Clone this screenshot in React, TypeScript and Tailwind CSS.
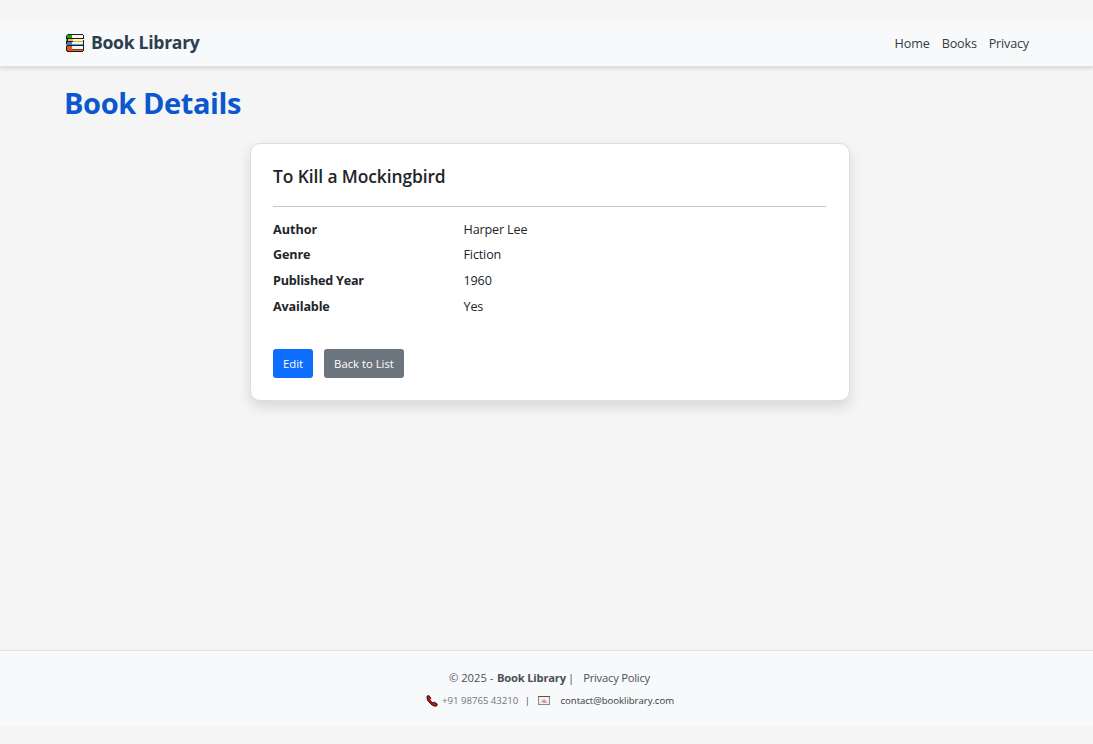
import React from "react";

function BooksIcon() {
  return (
    <svg className="h-[20px] w-[20px] shrink-0" viewBox="0 0 20 20">
      <path d="M4 1H18V2H19V6H18V7H19V18H18V19H2V18H1V13L2 12L1 11V8L2 7L1 6V3L3 1Z" fill="#1b1b1b" />
      <path d="M3 2H7V5H2V3Z" fill="#16a51b" />
      <path d="M7 2H18V5H7Z" fill="#f4f4f4" />
      <path d="M3 6H8V8H3Z" fill="#f2c230" />
      <path d="M8 6H18V8H8Z" fill="#fff3c0" />
      <path d="M8 8H18V9H8Z" fill="#e3b62c" />
      <path d="M2 9H7V12H2Z" fill="#2d84d8" />
      <path d="M7 9H18V11H7Z" fill="#eaf3fb" />
      <path d="M7 11H18V12H7Z" fill="#5ba5e5" />
      <path d="M2 13H7V18H3L2 17Z" fill="#f0500f" />
      <path d="M7 13H18V16H7Z" fill="#f7f7f7" />
      <path d="M7 16.5H18V18H7Z" fill="#f0601f" />
    </svg>
  );
}

function PhoneIcon() {
  return (
    <svg className="h-[12px] w-[12px] shrink-0" viewBox="0 0 12 12">
      <path
        d="M1 1.2L3 .6L4.8 3.4L3.8 4.6Q4.8 6.8 7 8L8.4 7.2L11.2 9L10.6 11Q8.4 12 5 9.2Q0 5 1 1.2Z"
        fill="#d81414"
        stroke="#2a0b0b"
        strokeWidth="1"
      />
    </svg>
  );
}

function MailIcon() {
  return (
    <svg className="block h-[9px] w-[12px] shrink-0" viewBox="0 0 12 9">
      <rect x=".5" y=".5" width="11" height="8" fill="#f2f2f2" stroke="#8a8a8a" />
      <path d="M0 .5H12" stroke="#555" />
      <path d="M2 7.5L5 3.5H7L10 7.5" fill="none" stroke="#cfcfcf" />
      <path d="M5 4H7V5H8V7H5V6H4V5H5Z" fill="#f0907f" />
    </svg>
  );
}

const details = [
  { label: "Author", value: "Harper Lee", height: "h-[25px]", spacing: "" },
  { label: "Genre", value: "Fiction", height: "h-[26px]", spacing: "tracking-[-0.15px]" },
  { label: "Published Year", value: "1960", height: "h-[26px]", spacing: "tracking-[-0.2px]" },
  { label: "Available", value: "Yes", height: "h-[26px]", spacing: "tracking-[-0.15px]" },
];

export default function App() {
  return (
    <div className="flex h-[744px] w-full flex-col bg-[#f5f5f5] pt-[20px] font-['Open_Sans','Noto_Sans',sans-serif] text-[12.6px] text-[#212529]">
      <header className="flex h-[47px] shrink-0 items-center justify-between border-b border-[#dee2e6] bg-[#f8f9fb] pr-[64px] pl-[65px] shadow-[0_2px_3px_rgba(0,0,0,0.1)]">
        <a className="flex items-center gap-[6px] text-[17.6px] leading-6 font-bold tracking-[-0.3px] text-[#2c3e50]">
          <BooksIcon />
          <span className="mb-[2px]">Book Library</span>
        </a>
        <nav className="mt-[2px] flex gap-[12px] leading-5 tracking-[-0.1px] text-[#343a40]">
          <a>Home</a>
          <a className="tracking-[-0.18px]">Books</a>
          <a className="tracking-[-0.18px]">Privacy</a>
        </nav>
      </header>

      <main className="flex-1 px-[64px] pt-[16px]">
        <h1 className="text-[29px] leading-[40px] font-bold tracking-[-0.4px] text-[#0b57d0]">
          Book Details
        </h1>
        <section className="mt-[20px] ml-[186px] h-[258px] w-[600px] rounded-[10px] border border-[#dddedf] bg-white px-[22px] pt-[20px] shadow-[0_6px_13px_rgba(0,0,0,0.12)]">
          <h2 className="text-[17.4px] leading-6 font-semibold tracking-[-0.09px]">
            To Kill a Mockingbird
          </h2>
          <hr className="mt-[18px] mr-[1px] border-[#c7c8c9]" />
          <dl className="mt-[13px]">
            {details.map((item) => (
              <div key={item.label} className={`flex leading-5 ${item.height}`}>
                <dt className={`w-[190px] font-bold ${item.spacing}`}>{item.label}</dt>
                <dd className="pl-[0.5px] tracking-[-0.15px]">{item.value}</dd>
              </div>
            ))}
          </dl>
          <div className="mt-[26px] flex gap-[11px] text-[11.3px] text-white">
            <button className="h-[29px] w-[40px] rounded-[3px] bg-[#0d6efd] pt-px">Edit</button>
            <button className="h-[29px] w-[80px] rounded-[3px] bg-[#6c757d] pt-px">
              Back to List
            </button>
          </div>
        </section>
      </main>

      <footer className="mb-[18px] flex h-[76px] shrink-0 flex-col border-t border-[#dee2e6] bg-[#f8f9fb] pt-[17px] text-[#495057]">
        <div className="flex h-[20px] items-center pl-[449px] text-[11.2px] whitespace-pre">
          <span className="w-[48px]">© 2025 - </span>
          <strong className="w-[71px] font-bold tracking-[-0.2px]">Book Library</strong>
          <span>|</span>
          <a className="ml-[9px] tracking-[-0.22px]">Privacy Policy</a>
        </div>
        <div className="mt-[4px] flex h-[18px] items-center pl-[426px] text-[9.6px]">
          <PhoneIcon />
          <span className="ml-[4px] text-[#6c757d]">+91 98765 43210</span>
          <span className="ml-[6.5px]">|</span>
          <span className="ml-[7.5px] mb-px">
            <MailIcon />
          </span>
          <a className="ml-[11px] tracking-[-0.05px] text-[#343a40]">contact@booklibrary.com</a>
        </div>
      </footer>
    </div>
  );
}
